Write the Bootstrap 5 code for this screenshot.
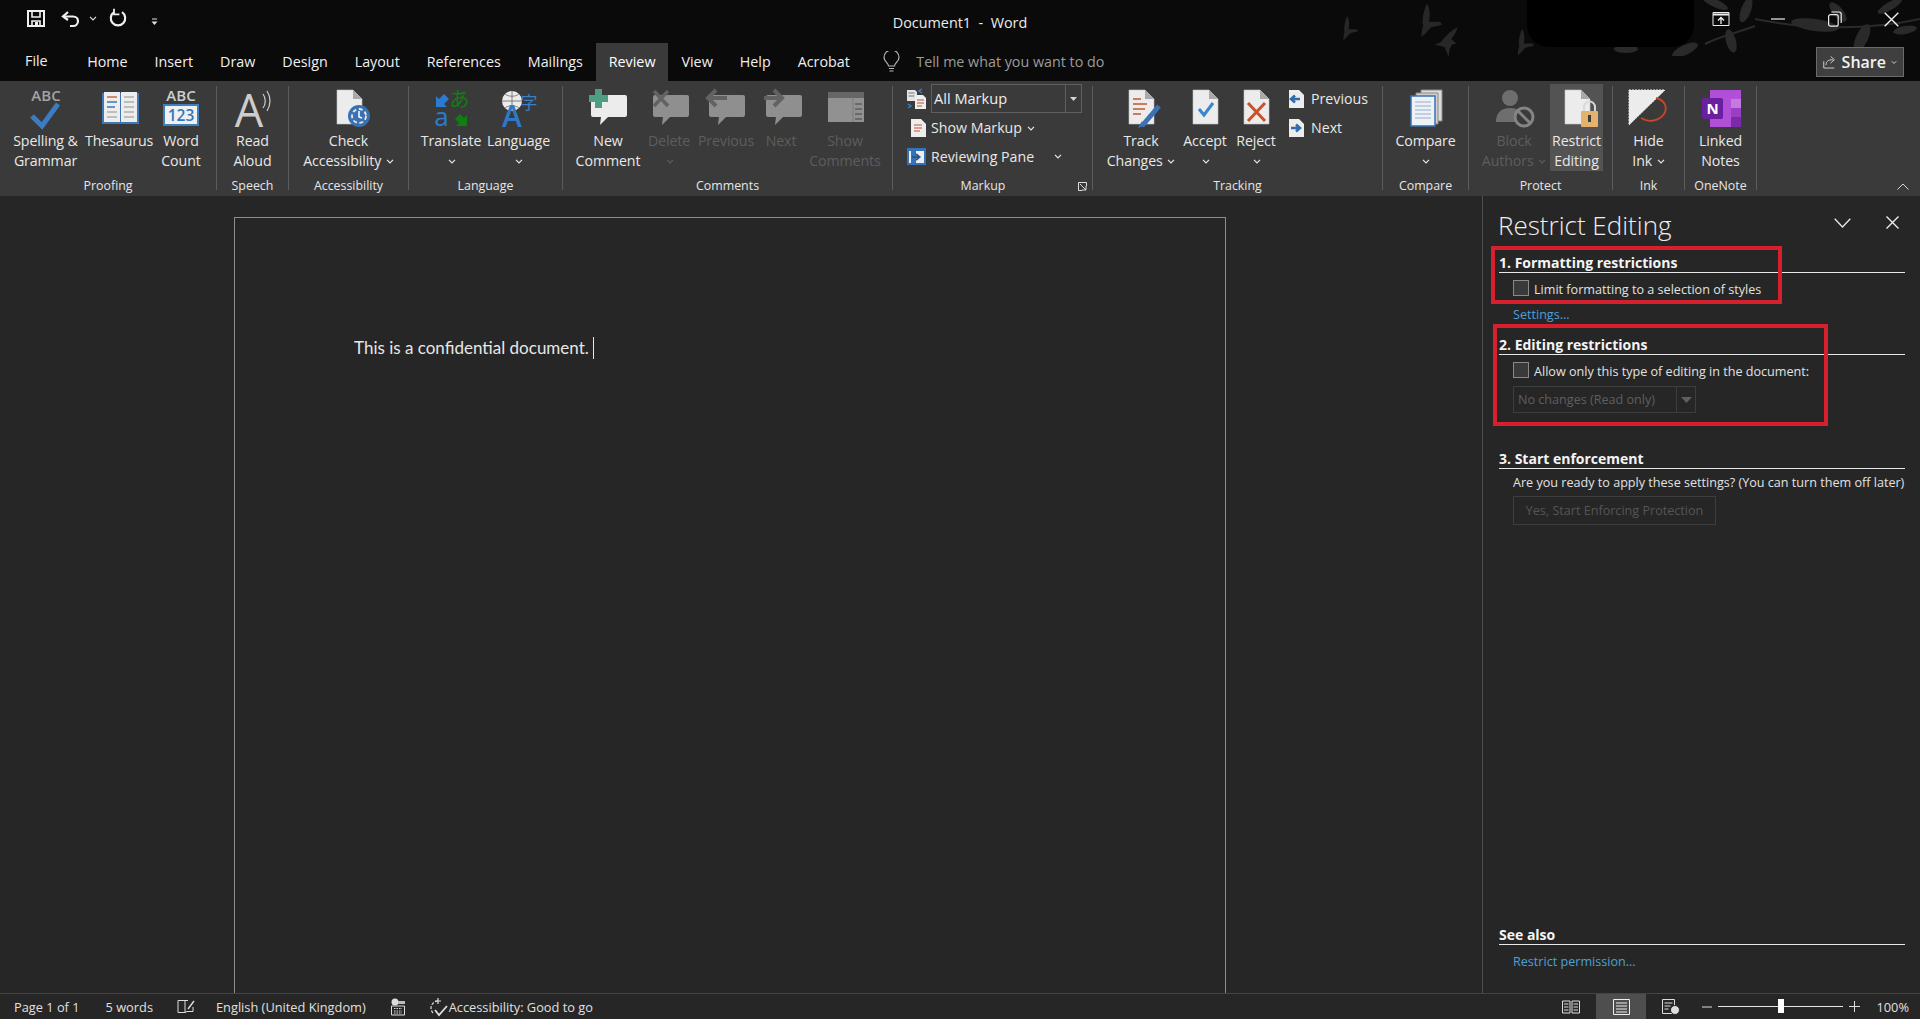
<!DOCTYPE html>
<html lang="en">
<head>
<meta charset="utf-8">
<title>Document1 - Word</title>
<link href="https://cdn.jsdelivr.net/npm/bootstrap@5.3.0/dist/css/bootstrap.min.css" rel="stylesheet">
<style>
html,body{height:1019px;width:1920px;overflow:hidden;background:#262626;color:#e8e8e8;font-family:"Open Sans","Noto Sans",sans-serif;font-size:14.2px;line-height:20px}
svg{display:block}
.wd-head{background:#0a0a0a;height:81px}
.wd-decor{position:absolute;left:1330px;top:0;pointer-events:none}
.wd-title{height:43px;position:relative}
.wd-side{flex:1 1 0}
.q-save{margin:8px 0 0 26px}
.q-undo{margin:8px 0 0 15px}
.q-cv{margin:16px 0 0 8px;color:#ddd}
.q-redo{margin:8px 0 0 12px}
.q-more{margin:18px 0 0 24px}
.wd-doctitle{font-size:14.4px;color:#ececec;padding-top:13px;white-space:pre}
.wd-win{width:57px;height:38px}
.wd-winbar{height:38px}
.wd-tabs{height:38px;position:relative}
.wd-tab{padding:0 13.5px;font-size:14.3px;color:#f0f0f0;line-height:38px}
.wd-tab.act{background:#3a3a3a;padding:0 12.5px;color:#fff}
.wd-tab.first{padding:0 26px 0 25px;line-height:36px}
.wd-tell{margin-left:20px;gap:16px;color:#9c9c9c;font-size:14.3px}
.wd-share{margin:4px 16px 4px auto;width:88px;background:#3f3f3f;border:1px solid #6b6b6b;font-size:16px;font-weight:600;color:#f2f2f2;padding:0 6px;gap:5px}
.wd-share svg.sv{color:#ddd}
.wd-ribbon{height:115px;background:#3a3a3a}
.rg{height:104px;margin-top:5px;border-right:1px solid #5c5c5c;flex:none}
.rg-row{flex:1 1 auto;min-height:0}
.rl-g{font-size:12.4px;line-height:16px;text-align:center;margin-bottom:-4px;color:#e6e6e6}
.rb{margin-top:-2px;height:87px;padding-top:2px;text-align:center;flex:none}
.rb svg.ic{margin:0 auto;overflow:visible}
.rb .tx{line-height:19.5px;margin-top:1px;white-space:nowrap;color:#e8e8e8;font-size:14.2px;letter-spacing:-.1px}
.rb.off .tx{color:#5d5d5d}
.rb.on{background:#535353}
.cv{display:inline-block;vertical-align:middle;margin-left:1px}
.w44{width:44px}.w48{width:48px}.w53{width:53px}.w54{width:54px}.w58{width:58px}.w66{width:66px}.w67{width:67px}.w68{width:68px}.w72{width:72px}.w74{width:74px}.w79{width:79px}.w80{width:80px}.w84{width:84px}
.gw216{width:217px;padding-left:6px}.gw216 .rl-g{margin-left:-6px}
.gw73{width:72px}.gw119{width:120px}
.gw154{width:154px;padding-left:8px}.gw154 .rl-g{margin-left:-8px}
.gw331{width:330px;padding-left:8px}.gw331 .rl-g{margin-left:-8px}
.gw199{width:200px}
.gw290{width:290px;padding-left:8px}.gw290 .rl-g{margin-left:-8px}
.gw86{width:86px}
.gw144{width:144px;padding-left:9px}.gw144 .rl-g{margin-left:-9px}
.gw72{width:72px}
.m-col{margin-top:-2px}
.m-row{height:29px;padding-left:14px;flex:none;white-space:nowrap}
.m-ic{width:24px;flex:none}
.m-box{width:151px;height:29px;border:1px solid #5f5f5f;padding:0 0 2px 2px;font-size:14.6px;color:#eee}
.m-drop{margin:0 0 -2px auto;width:16px;height:calc(100% + 2px);border-left:1px solid #5f5f5f}
.m-cv2{margin-left:20px}
.m-lch{width:19px}
.s-col{margin:-2px 0 0 6px}
.s-row{height:29px;white-space:nowrap;gap:7px}
.r-tail{padding:0 11px 6px 0}
.wd-main{height:797px}
.wd-canvas{width:1482px;padding:21px 0 0 234px;flex:none}
.wd-page{width:992px;height:776px;border:1px solid #8c8c8c;border-bottom:0;padding:119px 0 0 119px;font-family:Lato,Carlito,sans-serif;font-size:17px;line-height:22px;color:#e6e6e6}
.wd-caret{display:inline-block;width:1px;height:22px;background:#e6e6e6;vertical-align:top}
.wd-pane{flex:1 1 auto;border-left:1px solid #4f4f4f;padding:11px 15px 22px 16px;font-size:12.6px;line-height:18px;color:#e2e2e2;position:relative}
.p-title{font-size:26px;font-weight:300;line-height:36px;color:#eee;height:36px;margin-left:-1px}
.p-ctl{padding-top:9px}
.p-chev{margin:2px 35px 0 0}
.p-x{margin-right:6px}
.p-head{font-weight:700;font-size:14px;color:#f4f4f4;line-height:18px;border-bottom:1px solid #e8e8e8;height:19px;white-space:nowrap}
.p-head.sp-a{margin-top:11px}.p-head.sp-b{margin-top:12px}.p-head.sp-c{margin-top:37px}.p-head.sp-d{margin-top:auto}
.p-ind{padding-left:14px}
.p-check{margin-top:7px;padding-left:14px;gap:5px;height:16px}
.p-check span{padding-top:4px}
.p-check .form-check-input{width:16px;height:16px;margin:0;border-radius:0;background-color:#3a3a3a;border:1px solid #8a8a8a;flex:none}
.p-link{color:#4ba0dc}
.sp-s{margin-top:10px}
.sp-r{margin-top:8px}
.sp-q{margin-top:5px}
.p-sel{margin:8px 0 0 14px;width:183px;height:27px;border:1px solid #3e3e3e;color:#5f5f5f;padding-left:4px}
.p-sel .dv{margin-left:auto;width:19px;height:100%;border-left:1px solid #3e3e3e}
.p-btn{margin:4px 0 0 14px;width:203px;height:29px;border:1px solid #3e3e3e;color:#555;background:transparent;padding:2px 0 0;font-size:12.6px;border-radius:0;--bs-btn-disabled-opacity:1;--bs-btn-disabled-border-color:#3e3e3e;--bs-btn-disabled-color:#555}
.red-box{position:absolute;border:4px solid #d6202e}
.red-a{left:8px;top:50px;width:291px;height:58px}
.red-b{left:10px;top:128px;width:335px;height:102px}
.wd-status{height:26px;border-top:1px solid #444;background:#262626;font-size:12.8px;color:#e0e0e0;white-space:nowrap}
.st-a{margin-left:14px}.st-b{margin-left:26px}.st-c{margin-left:24px}.st-d{margin-left:21px}.st-e{margin-left:24px}.st-f{margin-left:22px}.st-g{margin-left:1px}
.st-active{background:#4e4e4e;width:50px;height:25px}
.st-view{width:50px;height:25px}
.st-minus{margin-left:6px}
.st-track{width:125px;height:1px;background:#e6e6e6;margin:0 6px;position:relative}
.st-thumb{position:absolute;left:60px;top:-7px;width:6px;height:14px;background:#fff}
.st-pct{margin:0 11px 0 16px}
</style>
</head>
<body>
<svg width="0" height="0" class="position-absolute">
<symbol id="cv" viewBox="0 0 8 5"><path d="M1 .8l3 3 3-3" fill="none" stroke="currentColor" stroke-width="1.2"/></symbol>
<symbol id="doc" viewBox="0 0 48 44"><path d="M12 6h16l9 9v25H12z" fill="#ececec" stroke="#c6c6c6" stroke-width=".6"/><path d="M28 6v9h9z" fill="#a9a9a9"/></symbol>
<symbol id="bird" viewBox="0 0 30 36"><path d="M14 0c4 8 3 16 2 20l12 0 2 3-12 3c-4 4-6 8-10 10 0-6 1-10 2-12-2-4 0-16 4-24z" fill="#272727"/></symbol>
<symbol id="bird2" viewBox="0 0 30 36"><path d="M28 0c-2 6-4 10-8 14l6 6-5 1-3 6-1 9-5-12-12-3 8-3C12 12 20 4 28 0z" fill="#272727"/></symbol>
</svg>

<header class="wd-head position-relative">
<svg class="wd-decor" width="590" height="56" viewBox="0 0 590 56">
<use href="#bird" x="7" y="16" width="22" height="24"/>
<use href="#bird" x="84" y="3" width="28" height="34"/>
<use href="#bird2" x="103" y="27" width="28" height="30"/>
<use href="#bird" x="182" y="28" width="22" height="28"/>
<g stroke="#2a2a2a" stroke-width="2" fill="none"><path d="M590 19C540 30 480 30 425 19"/><path d="M375 44c15-8 35-12 50-18"/></g>
<g fill="#2a2a2a">
<ellipse cx="485" cy="25" rx="24" ry="6" transform="rotate(8 485 25)"/>
<ellipse cx="532" cy="38" rx="15" ry="6" transform="rotate(-65 532 38)"/>
<ellipse cx="508" cy="12" rx="12" ry="5" transform="rotate(50 508 12)"/>
<ellipse cx="401" cy="41" rx="12" ry="5" transform="rotate(75 401 41)"/>
<ellipse cx="355" cy="50" rx="14" ry="5" transform="rotate(-25 355 50)"/>
<ellipse cx="296" cy="49" rx="12" ry="4"/>
<ellipse cx="416" cy="10" rx="13" ry="5" transform="rotate(-70 416 10)"/>
<ellipse cx="385" cy="3" rx="14" ry="4" transform="rotate(25 385 3)"/>
<ellipse cx="560" cy="6" rx="14" ry="4" transform="rotate(-30 560 6)"/>
<ellipse cx="575" cy="30" rx="12" ry="4" transform="rotate(-10 575 30)"/>
</g>
<rect x="197" y="-20" width="167" height="67" rx="22" fill="#000"/>
</svg>

<div class="wd-title d-flex">
<div class="wd-side d-flex align-items-start">
<svg class="q-save" width="20" height="20" viewBox="0 0 20 20" fill="none" stroke="#efefef" stroke-width="2"><path d="M2 3h16v15H2z"/><path d="M6 4v5h8V4" stroke-width="1.6"/><path d="M6 18v-5h8v5" stroke-width="1.6"/><path d="M9 14h3v4H9z" fill="#efefef" stroke="none"/></svg>
<svg class="q-undo" width="20" height="20" viewBox="0 0 20 20" fill="none" stroke="#efefef" stroke-width="2.2"><path d="M7 4L2 8.500 7 12"/><path d="M3 8.500h9c3 0 5 2 5 4.500s-2 5-5 5H9"/></svg>
<svg class="q-cv" width="8" height="5"><use href="#cv"/></svg>
<svg class="q-redo" width="18" height="20" viewBox="0 0 18 20" fill="none" stroke="#efefef" stroke-width="2.2"><path d="M13 4.200a7.200 7.200 0 1 1-8 0"/><path d="M5 .8v5.600h5.400" stroke-width="1.800"/></svg>
<svg class="q-more" width="7" height="8" viewBox="0 0 7 8"><path d="M1 1h5" stroke="#ddd"/><path d="M.5 3.500h6L3.500 7z" fill="#ddd"/></svg>
</div>
<div class="wd-doctitle">Document1  -  Word</div>
<div class="wd-winbar wd-side d-flex justify-content-end align-items-center">
<div class="wd-win d-flex align-items-center justify-content-center"><svg width="18" height="16" viewBox="0 0 18 16" fill="none" stroke="#eee"><path d="M1 1.500h16v13H1z"/><path d="M1 3.500h16" stroke-width="2"/><path d="M9 13V6.500M6 9.500l3-3 3 3" stroke-width="1.300"/></svg></div>
<div class="wd-win d-flex align-items-center justify-content-center"><svg width="14" height="2"><path d="M0 1h14" stroke="#eee" stroke-width="1.200"/></svg></div>
<div class="wd-win d-flex align-items-center justify-content-center"><svg width="14" height="16" viewBox="0 0 14 16" fill="none" stroke="#eee" stroke-width="1.200"><rect x=".6" y="3.600" width="9.600" height="11.600" rx="2"/><path d="M3.400 1h7.600c1.300 0 2.200 1 2.200 2.200V12"/></svg></div>
<div class="wd-win d-flex align-items-center justify-content-center"><svg width="15" height="15"><path d="M.7.700l13.600 13.600M14.300.700L.7 14.300" stroke="#f2f2f2" stroke-width="1.400"/></svg></div>
</div>
</div>

<nav class="wd-tabs d-flex">
<div class="wd-tab first">File</div>
<div class="wd-tab">Home</div><div class="wd-tab">Insert</div><div class="wd-tab">Draw</div><div class="wd-tab">Design</div><div class="wd-tab">Layout</div><div class="wd-tab">References</div><div class="wd-tab">Mailings</div>
<div class="wd-tab act">Review</div>
<div class="wd-tab">View</div><div class="wd-tab">Help</div><div class="wd-tab">Acrobat</div>
<div class="wd-tell d-flex align-items-center">
<svg width="17" height="22" viewBox="0 0 17 22" fill="none" stroke="#b5b5b5" stroke-width="1.200"><path d="M5.500 15c0-3-4.500-4.500-4.500-8.500a7.500 7.500 0 0 1 15 0c0 4-4.500 5.500-4.500 8.500z"/><path d="M6 17.500h5M6.500 20h4"/></svg>
<span>Tell me what you want to do</span>
</div>
<div class="wd-share d-flex align-items-center">
<svg width="18" height="18" viewBox="0 0 18 18" fill="none" stroke="#e8e8e8" stroke-width="1.100"><path d="M1 8v9h14"/><path d="M4 13c0-5 3-7 9-7M10 1.500l5 4.500-5 4.500"/></svg>
<span>Share</span>
<svg class="sv" width="8" height="5"><use href="#cv"/></svg>
</div>
</nav>
</header>

<section class="wd-ribbon d-flex">

<div class="rg gw216 d-flex flex-column">
<div class="rg-row d-flex">
<div class="rb w79"><svg class="ic" width="48" height="44" viewBox="0 2 48 44"><text x="24" y="17" text-anchor="middle" font-family="Open Sans" font-size="15" font-weight="600" fill="#a3a3a3">ABC</text><path d="M10 32l10 10 16-22" fill="none" stroke="#3b7dc4" stroke-width="5"/></svg><div class="tx">Spelling &amp;<br>Grammar</div></div>
<div class="rb w67"><svg class="ic" width="48" height="44" viewBox="0 2 48 44"><path d="M7 9h37v31H7z" fill="#3e77b4"/><path d="M9 8h16v30H9zM26 8h16v30H26z" fill="#ededed"/><path d="M12 13h10" stroke="#c0562f" stroke-width="1.300"/><path d="M12 18h10M12 23h8" stroke="#3e77b4" stroke-width="1.300"/><path d="M12 28h10M12 33h10M29 13h10M29 18h10M29 23h10M29 28h10M29 33h10" stroke="#8f8f8f" stroke-width="1.200"/></svg><div class="tx">Thesaurus</div></div>
<div class="rb w58"><svg class="ic" width="48" height="44" viewBox="0 2 48 44"><text x="24" y="17" text-anchor="middle" font-family="Open Sans" font-size="15" font-weight="600" fill="#cfcfcf">ABC</text><rect x="7" y="21" width="34" height="20" fill="#f0f0f0" stroke="#3e7fc0" stroke-width="2"/><text x="24" y="37" text-anchor="middle" font-family="Open Sans" font-size="15.500" font-weight="600" fill="#2f78bd">123</text></svg><div class="tx">Word<br>Count</div></div>
</div>
<div class="rl-g">Proofing</div>
</div>

<div class="rg gw73 d-flex flex-column">
<div class="rg-row d-flex">
<div class="rb w-100"><svg class="ic" width="48" height="44" viewBox="0 2 48 44"><text x="20" y="43" text-anchor="middle" font-family="Open Sans" font-size="45" fill="#cdcdcd">A</text><path d="M34 10c3 4 3 10 0 14M38 7c4 6 4 14 0 20" fill="none" stroke="#cdcdcd" stroke-width="1.200"/></svg><div class="tx">Read<br>Aloud</div></div>
</div>
<div class="rl-g">Speech</div>
</div>

<div class="rg gw119 d-flex flex-column">
<div class="rg-row d-flex">
<div class="rb w-100"><svg class="ic" width="48" height="44" viewBox="0 2 48 44"><use href="#doc" width="48" height="44"/><circle cx="34" cy="32" r="11" fill="#3a71b3"/><circle cx="34" cy="32" r="7" fill="none" stroke="#e9e9e9" stroke-width="1.800" stroke-dasharray="4 2.500"/><path d="M34 27v6l3 1" fill="none" stroke="#fff" stroke-width="1.500"/></svg><div class="tx">Check<br>Accessibility <svg class="cv" width="8" height="5"><use href="#cv"/></svg></div></div>
</div>
<div class="rl-g">Accessibility</div>
</div>

<div class="rg gw154 d-flex flex-column">
<div class="rg-row d-flex">
<div class="rb w68"><svg class="ic" width="48" height="44" viewBox="0 2 48 44"><path d="M9 23V12l3 3 5-5 5 5-5 5 3 3z" fill="#2b7bd0"/><text x="32.500" y="23" text-anchor="middle" font-family="Noto Sans CJK JP" font-size="20" fill="#0f7f12">あ</text><text x="14.500" y="42" text-anchor="middle" font-family="Open Sans" font-size="26" fill="#2b7bd0">a</text><path d="M40 31v11H29l3-3-4-4 5-5 4 4z" fill="#0f7f12"/></svg><div class="tx">Translate<br><svg class="cv" width="8" height="5"><use href="#cv"/></svg></div></div>
<div class="rb w67"><svg class="ic" width="48" height="44" viewBox="0 2 48 44"><circle cx="17" cy="17" r="10" fill="#ececec"/><path d="M7 17h20M17 7v20M10 10c4 3 10 3 14 0M10 24c4-3 10-3 14 0" stroke="#666" stroke-width=".8" fill="none"/><text x="34" y="25" text-anchor="middle" font-family="Noto Sans CJK JP" font-size="17" fill="#3b7fc4">字</text><text x="17" y="43" text-anchor="middle" font-family="Open Sans" font-size="30" font-weight="600" fill="#2f78c9">A</text></svg><div class="tx">Language<br><svg class="cv" width="8" height="5"><use href="#cv"/></svg></div></div>
</div>
<div class="rl-g">Language</div>
</div>

<div class="rg gw331 d-flex flex-column">
<div class="rg-row d-flex">
<div class="rb w74"><svg class="ic" width="48" height="44" viewBox="0 2 48 44"><path d="M9 11h32a2 2 0 0 1 2 2v18a2 2 0 0 1-2 2H24l-8 8 1-8H9a2 2 0 0 1-2-2V13a2 2 0 0 1 2-2z" fill="#ececec"/><path d="M11 5h7v6h6v7h-6v6h-7v-6H5v-7h6z" fill="#4f9d83"/></svg><div class="tx">New<br>Comment</div></div>
<div class="rb w48 off"><svg class="ic" width="48" height="44" viewBox="0 2 48 44"><path d="M10 11h32a2 2 0 0 1 2 2v18a2 2 0 0 1-2 2H25l-8 8 1-8h-8a2 2 0 0 1-2-2V13a2 2 0 0 1 2-2z" fill="#8f8f8f"/><path d="M9 7l14 15M23 7L9 22" stroke="#626262" stroke-width="3.500"/></svg><div class="tx">Delete<br><svg class="cv" width="8" height="5"><use href="#cv"/></svg></div></div>
<div class="rb w66 off"><svg class="ic" width="48" height="44" viewBox="0 2 48 44"><path d="M9 11h32a2 2 0 0 1 2 2v18a2 2 0 0 1-2 2H24l-8 8 1-8H9a2 2 0 0 1-2-2V13a2 2 0 0 1 2-2z" fill="#8f8f8f"/><path d="M25 14H7M14 6l-8 8 8 8" fill="none" stroke="#626262" stroke-width="4"/></svg><div class="tx">Previous</div></div>
<div class="rb w44 off"><svg class="ic" width="48" height="44" viewBox="0 2 48 44"><path d="M9 11h32a2 2 0 0 1 2 2v18a2 2 0 0 1-2 2H24l-8 8 1-8H9a2 2 0 0 1-2-2V13a2 2 0 0 1 2-2z" fill="#8f8f8f"/><path d="M5 14h18M15 6l8 8-8 8" fill="none" stroke="#626262" stroke-width="4"/></svg><div class="tx">Next</div></div>
<div class="rb w84 off"><svg class="ic" width="48" height="44" viewBox="0 2 48 44"><path d="M7 8h36v30H7z" fill="#919191"/><path d="M7 8h36v6H7z" fill="#666"/><path d="M32 14v24" stroke="#7d7d7d"/><path d="M34 20h7M34 25h7M34 30h7M34 35h7" stroke="#5e5e5e" stroke-width="1.500"/></svg><div class="tx">Show<br>Comments</div></div>
</div>
<div class="rl-g">Comments</div>
</div>

<div class="rg gw199 d-flex flex-column">
<div class="rg-row m-col">
<div class="m-row d-flex align-items-center"><div class="m-ic"><svg width="20" height="22" viewBox="0 0 20 22"><path d="M0 2h8l2 2v9H0z" fill="#e4e4e4"/><path d="M1.500 5h6M1.500 8h6" stroke="#777"/><path d="M8 7h8l3 3v11H8z" fill="#efefef"/><path d="M10 12h7M10 15h7M10 18h5" stroke="#b5532f"/><path d="M15 1l-3 2 3 2M1 16l3 2-3 2" fill="none" stroke="#3b80c8" stroke-width="1.500"/></svg></div><div class="m-box d-flex align-items-center">All Markup<div class="m-drop d-flex align-items-center justify-content-center"><svg width="7" height="4"><path d="M0 0h7L3.500 4z" fill="#d5d5d5"/></svg></div></div></div>
<div class="m-row d-flex align-items-center"><div class="m-ic ps-1"><svg width="15" height="18" viewBox="0 0 15 18"><path d="M0 0h10l5 5v13H0z" fill="#ededed"/><path d="M3 6h8M3 9h8M3 12h6" stroke="#c0562f" stroke-width="1.200"/></svg></div><span>Show Markup <svg class="cv" width="8" height="5"><use href="#cv"/></svg></span></div>
<div class="m-row d-flex align-items-center"><div class="m-ic"><svg width="19" height="17" viewBox="0 0 19 17"><path d="M0 0h19v17H0z" fill="#3572b8"/><path d="M2 3h15v12H2z" fill="#ededed"/><path d="M4 3h5v12H4z" fill="#3572b8"/><path d="M5 9h6M9 6l3.500 3L9 12" fill="none" stroke="#26598f" stroke-width="2"/></svg></div><span class="text-nowrap">Reviewing Pane</span><svg class="cv m-cv2" width="8" height="5"><use href="#cv"/></svg></div>
</div>
<div class="rl-g d-flex"><span class="flex-fill">Markup</span><span class="m-lch d-flex align-items-center justify-content-center"><svg width="9" height="9" viewBox="0 0 9 9" fill="none" stroke="#ddd"><path d="M8.500 4V.5H.5v8H4"/><path d="M2 2l6 6M8 4v4H4"/></svg></span></div>
</div>

<div class="rg gw290 d-flex flex-column">
<div class="rg-row d-flex">
<div class="rb w80"><svg class="ic" width="48" height="44" viewBox="0 2 48 44"><use href="#doc" width="48" height="44"/><path d="M16 15h8M16 20h14M16 25h12M16 30h8" stroke="#c0562f" stroke-width="1.500"/><path d="M42 22L25 42" stroke="#3a72b4" stroke-width="5"/><path d="M25 37l-4 7 6-2z" fill="#3a72b4"/></svg><div class="tx">Track<br>Changes <svg class="cv" width="8" height="5"><use href="#cv"/></svg></div></div>
<div class="rb w48"><svg class="ic" width="48" height="44" viewBox="0 2 48 44"><use href="#doc" width="48" height="44"/><path d="M18 25l5 6 9-12" fill="none" stroke="#3a85cf" stroke-width="3"/></svg><div class="tx">Accept<br><svg class="cv" width="8" height="5"><use href="#cv"/></svg></div></div>
<div class="rb w54"><svg class="ic" width="48" height="44" viewBox="0 2 48 44"><use href="#doc" width="48" height="44"/><path d="M16 19l17 18M33 19L16 37" stroke="#c9522b" stroke-width="3"/></svg><div class="tx">Reject<br><svg class="cv" width="8" height="5"><use href="#cv"/></svg></div></div>
<div class="s-col d-flex flex-column">
<div class="s-row d-flex align-items-center"><svg width="15" height="18" viewBox="0 0 15 18"><path d="M0 0h10l5 5v13H0z" fill="#ededed"/><path d="M11 9H3M6 5.500L2 9l4 3.500" fill="none" stroke="#2e6dad" stroke-width="2.500"/></svg>Previous</div>
<div class="s-row d-flex align-items-center"><svg width="15" height="18" viewBox="0 0 15 18"><path d="M0 0h10l5 5v13H0z" fill="#ededed"/><path d="M2 9h8M7 5.500l4 3.500-4 3.500" fill="none" stroke="#2e6dad" stroke-width="2.500"/></svg>Next</div>
</div>
</div>
<div class="rl-g">Tracking</div>
</div>

<div class="rg gw86 d-flex flex-column">
<div class="rg-row d-flex">
<div class="rb w-100"><svg class="ic" width="48" height="44" viewBox="0 2 48 44"><path d="M19 6h21v31H19z" fill="#dcdcdc" stroke="#8a8a8a"/><path d="M14 9h22v31H14z" fill="#cfcfcf" stroke="#8a8a8a"/><path d="M9 12h24v30H9z" fill="#eef2f6" stroke="#3a72b4" stroke-width="1.500"/><path d="M13 18h16M13 22h16M13 26h16M13 30h16M13 34h16" stroke="#8fb0d0"/></svg><div class="tx">Compare<br><svg class="cv" width="8" height="5"><use href="#cv"/></svg></div></div>
</div>
<div class="rl-g">Compare</div>
</div>

<div class="rg gw144 d-flex flex-column">
<div class="rg-row d-flex">
<div class="rb w72 off"><svg class="ic" width="48" height="44" viewBox="0 2 48 44"><circle cx="20" cy="14" r="8" fill="#6e6e6e"/><path d="M6 38c0-9 5-14 14-14s10 4 12 8v6z" fill="#6e6e6e"/><circle cx="34" cy="33" r="9" fill="#3a3a3a" stroke="#848484" stroke-width="3"/><path d="M28 27l12 12" stroke="#848484" stroke-width="3"/></svg><div class="tx">Block<br>Authors <svg class="cv" width="8" height="5"><use href="#cv"/></svg></div></div>
<div class="rb w53 on"><svg class="ic" width="48" height="44" viewBox="0 2 48 44"><use href="#doc" width="48" height="44"/><rect x="28" y="27" width="17" height="16" rx="1" fill="#e2b26e"/><path d="M31 27v-4a5.500 5.500 0 0 1 11 0v4" fill="none" stroke="#d9d9d9" stroke-width="2"/><path d="M36.500 31v7" stroke="#3d3d3d" stroke-width="3"/></svg><div class="tx">Restrict<br>Editing</div></div>
</div>
<div class="rl-g">Protect</div>
</div>

<div class="rg gw72 d-flex flex-column">
<div class="rg-row d-flex">
<div class="rb w-100"><svg class="ic" width="48" height="44" viewBox="0 2 48 44"><path d="M4 6h36L4 41z" fill="#ececec" stroke="#ececec" stroke-dasharray="2 1"/><path d="M31 14c9 2 12 10 8 16-5 7-15 9-23 4" fill="none" stroke="#c8472c" stroke-width="1.800"/></svg><div class="tx">Hide<br>Ink <svg class="cv" width="8" height="5"><use href="#cv"/></svg></div></div>
</div>
<div class="rl-g">Ink</div>
</div>

<div class="rg gw72 d-flex flex-column">
<div class="rg-row d-flex">
<div class="rb w-100"><svg class="ic" width="48" height="44" viewBox="0 2 48 44"><path d="M13 6h31v37H13z" fill="#b14fd8"/><path d="M34 15h10v9H34z" fill="#c47be0"/><path d="M34 24h10v9H34z" fill="#9a3fc2"/><path d="M34 33h10v10H34z" fill="#7b2ba8"/><rect x="5" y="14" width="21" height="21" rx="2" fill="#6a1fa0"/><text x="15.500" y="30" text-anchor="middle" font-family="Open Sans" font-size="15" font-weight="700" fill="#fff">N</text></svg><div class="tx">Linked<br>Notes</div></div>
</div>
<div class="rl-g">OneNote</div>
</div>

<div class="r-tail ms-auto align-self-end"><svg width="12" height="7"><path d="M.5 6.500L6 1l5.500 5.500" fill="none" stroke="#d5d5d5"/></svg></div>
</section>

<main class="wd-main d-flex">
<div class="wd-canvas">
<div class="wd-page">This is a confidential document. <span class="wd-caret"></span></div>
</div>
<aside class="wd-pane d-flex flex-column">
<div class="p-title d-flex">Restrict Editing
<div class="p-ctl ms-auto d-flex align-items-start">
<svg class="p-chev" width="17" height="10"><path d="M.7.700L8.500 9l7.800-8.300" fill="none" stroke="#e8e8e8" stroke-width="1.300"/></svg>
<svg class="p-x" width="13" height="13"><path d="M.5.500l12 12M12.500.5l-12 12" stroke="#eee" stroke-width="1.400"/></svg>
</div>
</div>
<div class="p-head sp-a">1. Formatting restrictions</div>
<div class="p-check d-flex align-items-center"><input class="form-check-input" type="checkbox" aria-label="Limit formatting"><span>Limit formatting to a selection of styles</span></div>
<div class="p-ind p-link sp-s">Settings...</div>
<div class="p-head sp-b">2. Editing restrictions</div>
<div class="p-check d-flex align-items-center"><input class="form-check-input" type="checkbox" aria-label="Allow only"><span>Allow only this type of editing in the document:</span></div>
<div class="p-sel d-flex align-items-center">No changes (Read only)<div class="dv d-flex align-items-center justify-content-center"><svg width="11" height="6"><path d="M0 0h11L5.500 6z" fill="#5e5e5e"/></svg></div></div>
<div class="p-head sp-c">3. Start enforcement</div>
<div class="p-ind text-nowrap sp-q">Are you ready to apply these settings? (You can turn them off later)</div>
<button class="btn p-btn" disabled>Yes, Start Enforcing Protection</button>
<div class="p-head sp-d">See also</div>
<div class="p-ind p-link sp-r">Restrict permission...</div>
<div class="red-box red-a"></div>
<div class="red-box red-b"></div>
</aside>
</main>

<footer class="wd-status d-flex align-items-center">
<span class="st-a">Page 1 of 1</span>
<span class="st-b">5 words</span>
<svg class="st-c" width="18" height="16" viewBox="0 0 18 16" fill="none" stroke="#ddd"><path d="M1 1.500h7v12H1zM8 13.500l2-1h6V8M8 1.500h3"/><path d="M11 10l6-8" stroke-width="1.400"/></svg>
<span class="st-d">English (United Kingdom)</span>
<svg class="st-e" width="16" height="18" viewBox="0 0 16 18"><circle cx="5" cy="4" r="3.500" fill="#ddd"/><path d="M8 3h7v3H8z" fill="#bbb"/><path d="M1.500 8h13v9h-13z" fill="none" stroke="#ddd"/><path d="M4 10.500h8M4 13h8M4 15h8" stroke="#ddd" stroke-dasharray="1.500 1"/></svg>
<svg class="st-f" width="20" height="20" viewBox="0 0 20 20" fill="none" stroke="#ddd" stroke-width="1.200"><path d="M10 4a7 7 0 0 0-7 7c0 2 1 4 2 5" stroke-dasharray="3 1.500"/><path d="M10 1v6M7 4h6"/><path d="M7 13l4 5 8-9" stroke-width="1.800"/></svg>
<span class="st-g">Accessibility: Good to go</span>
<div class="ms-auto d-flex align-items-center">
<div class="st-view d-flex align-items-center justify-content-center"><svg width="18" height="14" viewBox="0 0 18 14" fill="none" stroke="#ddd"><path d="M.5 1h7.500v12H.5zM10 1h7.500v12H10zM2 4h4.500M2 7h4.500M2 10h4.500M11.500 4h4.500M11.500 7h4.500M11.500 10h4.500"/></svg></div>
<div class="st-active d-flex align-items-center justify-content-center"><svg width="17" height="16" viewBox="0 0 17 16" fill="none" stroke="#eee"><path d="M.5.500h16v15H.5zM3 4h11M3 7h11M3 10h11M3 13h11"/></svg></div>
<div class="st-view d-flex align-items-center justify-content-center"><svg width="18" height="16" viewBox="0 0 18 16" fill="none" stroke="#ddd"><path d="M.5.500h12v14H.5zM2.500 4h8M2.500 7h6M2.500 10h4"/><circle cx="13" cy="11" r="4.500" fill="#ddd" stroke="#262626"/></svg></div>
<svg class="st-minus" width="10" height="2"><path d="M0 1h10" stroke="#ddd"/></svg>
<div class="st-track"><div class="st-thumb"></div></div>
<svg width="11" height="11"><path d="M0 5.500h11M5.500 0v11" stroke="#ddd"/></svg>
<span class="st-pct">100%</span>
</div>
</footer>
</body>
</html>
